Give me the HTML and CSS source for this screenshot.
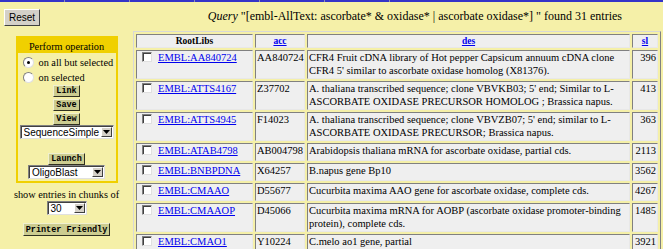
FILE: index.html
```html
<!DOCTYPE html>
<html lang="en">
<head>
    <meta charset="UTF-8">
    <title>SRS Query Result</title>
    <link rel="stylesheet" href="styles.css">
</head>
<body>
    <div class="topbar">
        <span></span><span></span><span></span><span></span><span></span><span></span>
    </div>
    <div class="page">
        <div class="side">
            <button class="reset">Reset</button>
            <div class="perform">
                <div class="perform-head">Perform operation</div>
                <div class="perform-body">
                    <label class="radio"><span class="dot on"></span>on all but selected</label>
                    <label class="radio"><span class="dot"></span>on selected</label>
                    <button class="op first">Link</button>
                    <button class="op">Save</button>
                    <button class="op">View</button>
                    <div class="sel wide">SequenceSimple<span class="arrow"><svg width="7" height="4" viewBox="0 0 7 4"><path d="M0 0h7L3.5 4z" fill="#000"/></svg></span></div>
                    <button class="op launch">Launch</button>
                    <div class="sel mid">OligoBlast<span class="arrow"><svg width="7" height="4" viewBox="0 0 7 4"><path d="M0 0h7L3.5 4z" fill="#000"/></svg></span></div>
                </div>
            </div>
            <p class="chunks">show entries in chunks of</p>
            <div class="sel small">30<span class="arrow"><svg width="7" height="4" viewBox="0 0 7 4"><path d="M0 0h7L3.5 4z" fill="#000"/></svg></span></div>
            <button class="op printer">Printer Friendly</button>
        </div>
        <div class="main">
            <p class="query"><i>Query</i> "[embl-AllText: ascorbate* &amp; oxidase* | ascorbate oxidase*] " found 31 entries</p>
            <table class="results">
                <tr>
                    <th class="c-lib">RootLibs</th>
                    <th class="c-acc"><a href="#">acc</a></th>
                    <th class="c-des"><a href="#">des</a></th>
                    <th class="c-sl"><a href="#">sl</a></th>
                </tr>
                <tr>
                    <td class="lib"><span class="box"></span><a href="#">EMBL:AA840724</a></td>
                    <td>AA840724</td>
                    <td>CFR4 Fruit cDNA library of Hot pepper Capsicum annuum cDNA clone CFR4 5' similar to ascorbate oxidase homolog (X81376).</td>
                    <td class="num">396</td>
                </tr>
                <tr>
                    <td class="lib"><span class="box"></span><a href="#">EMBL:ATTS4167</a></td>
                    <td>Z37702</td>
                    <td>A. thaliana transcribed sequence; clone VBVKB03; 5' end; Similar to L-<wbr>ASCORBATE OXIDASE PRECURSOR HOMOLOG ; Brassica napus.</td>
                    <td class="num">413</td>
                </tr>
                <tr>
                    <td class="lib"><span class="box"></span><a href="#">EMBL:ATTS4945</a></td>
                    <td>F14023</td>
                    <td>A. thaliana transcribed sequence; clone VBVZB07; 5' end; similar to L-<wbr>ASCORBATE OXIDASE PRECURSOR; Brassica napus.</td>
                    <td class="num">363</td>
                </tr>
                <tr>
                    <td class="lib"><span class="box"></span><a href="#">EMBL:ATAB4798</a></td>
                    <td>AB004798</td>
                    <td>Arabidopsis thaliana mRNA for ascorbate oxidase, partial cds.</td>
                    <td class="num">2113</td>
                </tr>
                <tr>
                    <td class="lib"><span class="box"></span><a href="#">EMBL:BNBPDNA</a></td>
                    <td>X64257</td>
                    <td>B.napus gene Bp10</td>
                    <td class="num">3562</td>
                </tr>
                <tr>
                    <td class="lib"><span class="box"></span><a href="#">EMBL:CMAAO</a></td>
                    <td>D55677</td>
                    <td>Cucurbita maxima AAO gene for ascorbate oxidase, complete cds.</td>
                    <td class="num">4267</td>
                </tr>
                <tr>
                    <td class="lib"><span class="box"></span><a href="#">EMBL:CMAAOP</a></td>
                    <td>D45066</td>
                    <td>Cucurbita maxima mRNA for AOBP (ascorbate oxidase promoter-binding protein), complete cds.</td>
                    <td class="num">1485</td>
                </tr>
                <tr>
                    <td class="lib"><span class="box"></span><a href="#">EMBL:CMAO1</a></td>
                    <td>Y10224</td>
                    <td>C.melo ao1 gene, partial</td>
                    <td class="num">3921</td>
                </tr>
            </table>
        </div>
    </div>
</body>
</html>
```

FILE: styles.css
```css
body {
    margin: 0;
    background: #f5f0a8;
    font-family: "Liberation Serif", "Times New Roman", serif;
    font-size: 10.5px;
    color: #000;
    overflow: hidden;
}
.topbar {
    display: flex;
    height: 2px;
    background: #3434c8;
}
.topbar span {
    width: 64px;
    border-right: 1px solid #9090b0;
}
.page {
    display: flex;
}

/* left column */
.side {
    width: 133px;
    display: flex;
    flex-direction: column;
    align-items: center;
    font-size: 10.3px;
}
.reset {
    align-self: flex-start;
    margin: 7px 0 0 4px;
    width: 36px;
    height: 17px;
    padding: 0;
    font-family: "Liberation Sans", Arial, sans-serif;
    font-size: 10px;
    background: #d4d0c8;
    border: 1px solid;
    border-color: #fff #404040 #404040 #fff;
}
.perform {
    margin-top: 10px;
    width: 98px;
    border: 2px solid #f0d000;
}
.perform-head {
    background: #f0d000;
    text-align: center;
    line-height: 13px;
    padding: 2px 0 0;
}
.perform-body {
    display: flex;
    flex-direction: column;
    align-items: center;
    padding: 2px 0 2px;
}
.radio {
    align-self: flex-start;
    display: flex;
    align-items: center;
    margin-left: 5px;
    height: 15px;
    white-space: nowrap;
}
.dot {
    width: 9px;
    height: 9px;
    border-radius: 50%;
    background: #fff;
    border: 1px solid #808080;
    border-right-color: #e0e0e0;
    border-bottom-color: #e0e0e0;
    margin-right: 5px;
    position: relative;
}
.dot.on::after {
    content: "";
    position: absolute;
    left: 3px;
    top: 3px;
    width: 3px;
    height: 3px;
    border-radius: 50%;
    background: #000;
}
.op {
    font-family: "Liberation Mono", "Courier New", monospace;
    font-weight: bold;
    font-size: 8.5px;
    background: #cccc90;
    border: 1px solid;
    border-color: #f0f0d0 #303020 #303020 #f0f0d0;
    padding: 0 2px;
    height: 12px;
    line-height: 10px;
    margin-top: 2px;
}
.op.first {
    margin-top: 0;
}
.sel {
    box-sizing: border-box;
    display: flex;
    align-items: center;
    justify-content: space-between;
    background: #fff;
    border: 1px solid;
    border-color: #808080 #e0e0e0 #e0e0e0 #808080;
    box-shadow: inset 1px 1px 0 #404040;
    height: 14px;
    padding: 0 1px 0 3px;
    font-family: "Liberation Sans", Arial, sans-serif;
    font-size: 10px;
}
.arrow {
    width: 11px;
    height: 10px;
    background: #d4d0c8;
    border: 1px solid;
    border-color: #fff #404040 #404040 #fff;
    box-sizing: border-box;
    display: flex;
    align-items: center;
    justify-content: center;
}
.sel.wide {
    width: 94px;
}
.launch {
    margin-top: 14px;
}
.sel.mid {
    width: 77px;
}
.chunks {
    margin: 5px 0 0;
    line-height: 13px;
    white-space: nowrap;
}
.sel.small {
    width: 40px;
}
.printer {
    margin-top: 8px;
    height: 13px;
}

/* results */
.main {
    flex: 1;
    padding-right: 2px;
}
.query {
    margin: 7px 0 8px;
    text-align: right;
    padding-right: 39px;
    font-size: 12px;
    line-height: 14px;
}
.results {
    width: 100%;
    table-layout: fixed;
    border: 1px solid;
    border-color: #d8d8d8 #808080 #808080 #d8d8d8;
    border-spacing: 2px;
}
.results th, .results td {
    background: #efefef;
    border: 1px solid;
    border-color: #808080 #e8e8e8 #e8e8e8 #808080;
    padding: 1px 1px;
    vertical-align: top;
    text-align: left;
    line-height: 12.5px;
}
.results th {
    text-align: center;
    font-size: 9.5px;
    padding: 0;
    line-height: 12px;
}
.results td.lib {
    padding-bottom: 2.5px;
    white-space: nowrap;
}
.c-lib { width: 115px; }
.c-acc { width: 48px; }
.c-sl { width: 24px; }
.results td.num {
    text-align: right;
}
a {
    color: #0000ee;
}
.box {
    display: inline-block;
    width: 8px;
    height: 8px;
    background: #fff;
    border: 1px solid #808080;
    border-right-color: #e0e0e0;
    border-bottom-color: #e0e0e0;
    box-shadow: inset 1px 1px 0 #404040;
    margin: 0 6px 0 4px;
    vertical-align: -1px;
}
```
